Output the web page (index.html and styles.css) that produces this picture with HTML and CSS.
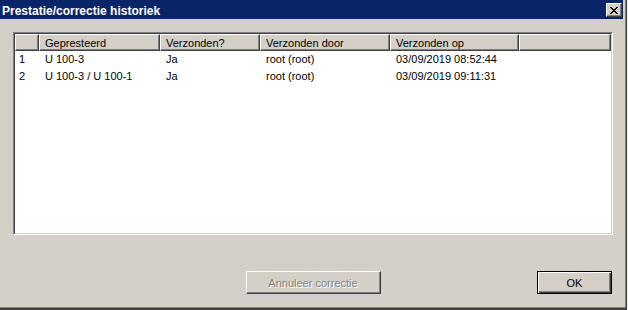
FILE: index.html
```html
<!DOCTYPE html>
<html>
<head>
<meta charset="utf-8">
<link rel="stylesheet" href="styles.css">
</head>
<body>
<div class="window">
  <div class="titlebar">
    <span class="title">Prestatie/correctie historiek</span>
    <button class="close" aria-label="Sluiten">
      <svg width="8" height="7" viewBox="0 0 8 7" shape-rendering="crispEdges">
        <rect x="0" y="0" width="2" height="1"/><rect x="6" y="0" width="2" height="1"/>
        <rect x="1" y="1" width="2" height="1"/><rect x="5" y="1" width="2" height="1"/>
        <rect x="2" y="2" width="4" height="1"/>
        <rect x="3" y="3" width="2" height="1"/>
        <rect x="2" y="4" width="4" height="1"/>
        <rect x="1" y="5" width="2" height="1"/><rect x="5" y="5" width="2" height="1"/>
        <rect x="0" y="6" width="2" height="1"/><rect x="6" y="6" width="2" height="1"/>
      </svg>
    </button>
  </div>
  <div class="listview">
    <div class="listview-inner">
      <div class="list-header">
        <div class="hcell"></div>
        <div class="hcell">Gepresteerd</div>
        <div class="hcell">Verzonden?</div>
        <div class="hcell">Verzonden door</div>
        <div class="hcell">Verzonden op</div>
        <div class="hcell"></div>
      </div>
      <div class="list-row">
        <div class="cell num">1</div>
        <div class="cell">U 100-3</div>
        <div class="cell">Ja</div>
        <div class="cell">root (root)</div>
        <div class="cell">03/09/2019 08:52:44</div>
        <div class="cell"></div>
      </div>
      <div class="list-row">
        <div class="cell num">2</div>
        <div class="cell">U 100-3 / U 100-1</div>
        <div class="cell">Ja</div>
        <div class="cell">root (root)</div>
        <div class="cell">03/09/2019 09:11:31</div>
        <div class="cell"></div>
      </div>
    </div>
  </div>
  <div class="buttons">
    <button class="btn btn-wide" disabled>Annuleer correctie</button>
    <button class="btn btn-default">OK</button>
  </div>
</div>
</body>
</html>
```

FILE: styles.css
```css
* { box-sizing: border-box; }
html, body { margin: 0; padding: 0; }
body {
  background: #ececec;
  width: 628px;
  height: 310px;
  overflow: hidden;
  font-family: "Liberation Sans", Arial, sans-serif;
  font-size: 11px;
  color: #000;
}
.window {
  width: 627px;
  height: 310px;
  background: #d4d0c8;
  border-right: 1px solid #404040;
  border-bottom: 2px solid #404040;
  box-shadow: inset -1px -1px 0 #808080;
  display: flex;
  flex-direction: column;
}
.titlebar {
  height: 19px;
  width: 623px;
  background: #0a246a;
  display: flex;
  justify-content: space-between;
  align-items: flex-start;
  padding: 0 1px 0 2px;
}
.title {
  color: #fff;
  font-weight: bold;
  font-size: 12px;
  line-height: 14px;
  margin-top: 4px;
}
.close {
  margin-top: 3px;
  width: 16px;
  height: 14px;
  padding: 0;
  background: #d4d0c8;
  border: 1px solid;
  border-color: #fff #404040 #404040 #fff;
  box-shadow: inset -1px -1px 0 #808080;
  display: flex;
  align-items: center;
  justify-content: center;
}
.close svg { display: block; fill: #000; margin: 0 1px 0 0; }
.listview {
  margin: 13px 0 0 13px;
  width: 600px;
  height: 203px;
  border: 1px solid;
  border-color: #808080 #fff #fff #808080;
}
.listview-inner {
  height: 100%;
  border: 1px solid;
  border-color: #404040 #d4d0c8 #d4d0c8 #404040;
  background: #fff;
}
.list-header, .list-row {
  display: grid;
  grid-template-columns: 24px 121px 100px 130px 129px 1fr;
}
.hcell {
  height: 17px;
  padding: 1px 0 0 5px;
  line-height: 14px;
  background: #d4d0c8;
  border: 1px solid;
  border-color: #fff #404040 #404040 #fff;
  box-shadow: inset -1px -1px 0 #808080;
  white-space: nowrap;
  overflow: hidden;
}
.list-row { height: 17px; }
.cell {
  padding: 1px 0 0 6px;
  line-height: 15px;
  white-space: nowrap;
  overflow: hidden;
}
.cell.num { padding-left: 4px; }
.buttons {
  margin-top: 36px;
  display: grid;
  grid-template-columns: 1fr auto 1fr;
  align-items: start;
}
.btn {
  font-family: "Liberation Sans", Arial, sans-serif;
  font-size: 11px;
  height: 23px;
  padding: 0;
  background: #d4d0c8;
  color: #000;
}
.btn-wide {
  grid-column: 2;
  width: 135px;
  border: 1px solid;
  border-color: #fff #404040 #404040 #fff;
  box-shadow: inset -1px -1px 0 #808080;
}
.btn-wide:disabled {
  color: #808080;
  text-shadow: 1px 1px 0 #fff;
}
.btn-default {
  grid-column: 3;
  justify-self: end;
  margin-right: 14px;
  width: 75px;
  border: 1px solid #000;
  box-shadow: inset 1px 1px 0 #fff, inset -1px -1px 0 #404040, inset -2px -2px 0 #808080;
}
```
